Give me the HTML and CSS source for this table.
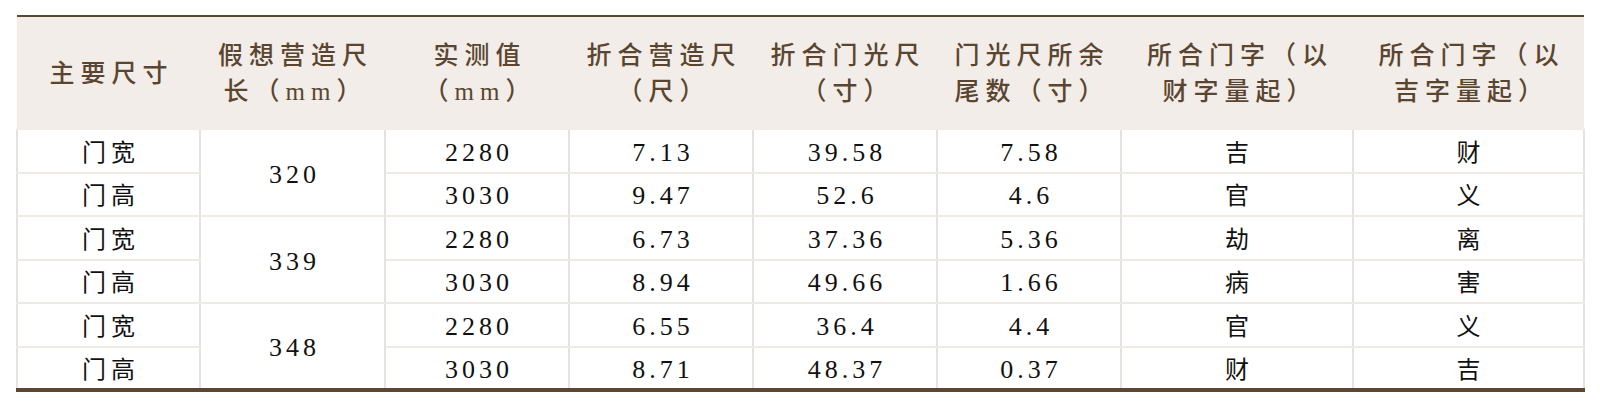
FILE: index.html
```html
<!DOCTYPE html>
<html lang="zh">
<head>
<meta charset="utf-8">
<link rel="stylesheet" href="styles.css">
</head>
<body>
<div class="wrap">
<table class="grid">
  <colgroup>
    <col class="c1"><col class="c2"><col class="c3"><col class="c4"><col class="c5"><col class="c6"><col class="c7"><col class="c8">
  </colgroup>
  <thead>
    <tr>
      <th>主要尺寸</th>
      <th>假想营造尺<br>长（mm）</th>
      <th>实测值<br>（mm）</th>
      <th>折合营造尺<br>（尺）</th>
      <th>折合门光尺<br>（寸）</th>
      <th>门光尺所余<br>尾数（寸）</th>
      <th>所合门字（以<br>财字量起）</th>
      <th>所合门字（以<br>吉字量起）</th>
    </tr>
  </thead>
  <tbody>
    <tr class="r1"><td>门宽</td><td rowspan="2">320</td><td>2280</td><td>7.13</td><td>39.58</td><td>7.58</td><td>吉</td><td>财</td></tr>
    <tr class="r2"><td>门高</td><td>3030</td><td>9.47</td><td>52.6</td><td>4.6</td><td>官</td><td>义</td></tr>
    <tr class="r1"><td>门宽</td><td rowspan="2">339</td><td>2280</td><td>6.73</td><td>37.36</td><td>5.36</td><td>劫</td><td>离</td></tr>
    <tr class="r2"><td>门高</td><td>3030</td><td>8.94</td><td>49.66</td><td>1.66</td><td>病</td><td>害</td></tr>
    <tr class="r1"><td>门宽</td><td rowspan="2" class="endspan">348</td><td>2280</td><td>6.55</td><td>36.4</td><td>4.4</td><td>官</td><td>义</td></tr>
    <tr class="r2 last"><td>门高</td><td>3030</td><td>8.71</td><td>48.37</td><td>0.37</td><td>财</td><td>吉</td></tr>
  </tbody>
</table>
</div>
</body>
</html>
```

FILE: styles.css
```css
html, body {
  margin: 0;
  padding: 0;
  background: #ffffff;
}
.wrap {
  padding: 15px 0 0 16px;
}
.grid {
  border-collapse: collapse;
  table-layout: fixed;
  width: 1567px;
  font-family: "Liberation Serif", "Noto Sans CJK SC", serif;
}
.c1 { width: 183px; }
.c2 { width: 185px; }
.c3 { width: 184px; }
.c4 { width: 184px; }
.c5 { width: 184px; }
.c6 { width: 184px; }
.c7 { width: 232px; }
.c8 { width: 231px; }

.grid thead tr {
  height: 113px;
}
.grid th {
  background: #f2ede8;
  color: #5a4630;
  font-weight: 500;
  font-size: 25px;
  line-height: 36px;
  letter-spacing: 6px;
  padding: 2px 0 0 6px;
  text-align: center;
  vertical-align: middle;
  border-top: 2px solid #5a4632;
  border-bottom: 2px solid #f2ede8;
}
.grid td {
  color: #111111;
  font-size: 26px;
  line-height: 28px;
  letter-spacing: 4px;
  padding: 4px 0 0 4px;
  text-align: center;
  vertical-align: middle;
  border-left: 2px solid #e6e2de;
  border-right: 2px solid #e6e2de;
  border-bottom: 2px solid #efeae4;
}
.grid td:first-child,
.grid td:nth-last-child(-n+2) {
  font-size: 24px;
  letter-spacing: 5px;
  padding-left: 5px;
}
.grid tbody tr {
  height: 43.5px;
}
.grid tr.last td,
.grid td.endspan {
  border-bottom: 4px solid #5a4632;
}
```
